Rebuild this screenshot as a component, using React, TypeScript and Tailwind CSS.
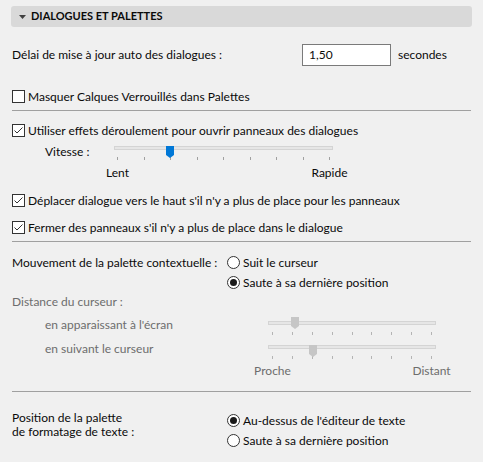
import React from "react";

function Checkbox({ checked }: { checked?: boolean }) {
  return (
    <span className="w-[13px] h-[13px] shrink-0 border border-[#333333] bg-white flex items-center justify-center">
      {checked && (
        <svg width="11" height="11" viewBox="0 0 11 11">
          <path d="M1.5 5.5 L4 8 L9.5 2.5" fill="none" stroke="#333333" strokeWidth="1" />
        </svg>
      )}
    </span>
  );
}

function Radio({ checked }: { checked?: boolean }) {
  return (
    <span className="w-[13px] h-[13px] shrink-0 rounded-full border border-[#333333] bg-white flex items-center justify-center">
      {checked && <span className="w-[7px] h-[7px] rounded-full bg-[#1a1a1a]" />}
    </span>
  );
}

function Thumb({ color }: { color: string }) {
  return (
    <svg width="8" height="12" viewBox="0 0 8 12">
      <path d="M0 0 H8 V9 L4 12 L0 9 Z" fill={color} />
    </svg>
  );
}

function Slider({
  width,
  thumbAt,
  thumbColor,
  tickColor,
  ticks = 9,
  inset,
}: {
  width: number;
  thumbAt: number;
  thumbColor: string;
  tickColor: string;
  ticks?: number;
  inset: string;
}) {
  return (
    <div className="relative" style={{ width }}>
      <div className="mt-[4px] h-[4px] border border-[#d4d4d4] bg-[#e6e6e6]" />
      <div className="absolute top-0" style={{ left: thumbAt - 4 }}>
        <Thumb color={thumbColor} />
      </div>
      <div className={`mt-[7px] flex justify-between ${inset}`}>
        {Array.from({ length: ticks }).map((_, i) => (
          <span key={i} className="w-px h-[3px]" style={{ background: tickColor }} />
        ))}
      </div>
    </div>
  );
}

function CheckRow({ checked, label, className }: { checked?: boolean; label: string; className: string }) {
  return (
    <div className={`flex items-center h-[13px] pl-[1px] gap-[3px] ${className}`}>
      <Checkbox checked={checked} />
      <span className="leading-[16px] whitespace-nowrap">{label}</span>
    </div>
  );
}

function RadioRow({ checked, label }: { checked?: boolean; label: string }) {
  return (
    <div className="flex items-center h-[13px] gap-[3px]">
      <Radio checked={checked} />
      <span className="leading-[16px] whitespace-nowrap">{label}</span>
    </div>
  );
}

export default function App() {
  return (
    <div className="w-[483px] h-[462px] bg-[#f0f0f0] pt-[6px] px-[11px] text-[12px] text-[#0a0a0a] font-['Lato',sans-serif] overflow-hidden">
      {/* Section header */}
      <div className="h-[21px] rounded-[3px] bg-[#d9d9d9] flex items-center pl-[8px] gap-[5px]">
        <svg width="7" height="4" viewBox="0 0 7 4">
          <path d="M0 0 H7 L3.5 4 Z" fill="#404040" />
        </svg>
        <span className="font-bold text-[11px]">DIALOGUES ET PALETTES</span>
      </div>

      <div className="mt-[17px] h-[22px] flex items-center">
        <span className="w-[291px] pl-[1px] whitespace-nowrap">Délai de mise à jour auto des dialogues :</span>
        <div className="w-[89px] h-[22px] border border-[#7a7a7a] bg-white pl-[6px] flex items-center">1,50</div>
        <span className="ml-[7px]">secondes</span>
      </div>

      <CheckRow className="mt-[24px]" label="Masquer Calques Verrouillés dans Palettes" />

      <div className="mt-[7px] mx-[1px] h-px bg-[#a0a0a0]" />

      <CheckRow className="mt-[13px]" checked label="Utiliser effets déroulement pour ouvrir panneaux des dialogues" />

      {/* Speed slider */}
      <div className="mt-[5px] flex items-start">
        <span className="w-[103px] pl-[34px] pt-[2px] leading-[16px]">Vitesse :</span>
        <div>
          <Slider width={219} thumbAt={56} thumbColor="#0078d7" tickColor="#a0a0a0" inset="px-[3px]" />
          <div className="mt-[5px] flex justify-between px-[3px] leading-[16px]">
            <span className="w-px flex justify-center whitespace-nowrap">Lent</span>
            <span className="w-px flex justify-center whitespace-nowrap">Rapide</span>
          </div>
        </div>
      </div>

      <CheckRow className="mt-[13px]" checked label="Déplacer dialogue vers le haut s'il n'y a plus de place pour les panneaux" />
      <CheckRow className="mt-[14px]" checked label="Fermer des panneaux s'il n'y a plus de place dans le dialogue" />

      <div className="mt-[7px] mx-[1px] h-px bg-[#a0a0a0]" />

      <div className="mt-[14px] flex items-start">
        <span className="w-[216px] pl-[1px] leading-[13px] whitespace-nowrap">Mouvement de la palette contextuelle :</span>
        <div className="flex flex-col gap-[7px]">
          <RadioRow label="Suit le curseur" />
          <RadioRow checked label="Saute à sa dernière position" />
        </div>
      </div>

      <div className="mt-[5px] pl-[1px] leading-[16px] text-[#6d6d6d]">Distance du curseur :</div>

      <div className="mt-[7px] flex items-start text-[#6d6d6d]">
        <span className="w-[257px] pl-[34px] leading-[16px]">en apparaissant à l'écran</span>
        <Slider width={168} thumbAt={27} thumbColor="#c6c6c6" tickColor="#b4b4b4" inset="px-[4px]" />
      </div>

      <div className="mt-[6px] flex items-start text-[#6d6d6d]">
        <span className="w-[257px] pl-[34px] leading-[16px]">en suivant le curseur</span>
        <div>
          <Slider width={168} thumbAt={45} thumbColor="#c6c6c6" tickColor="#b4b4b4" inset="px-[4px]" />
          <div className="mt-[4px] flex justify-between px-[4px] leading-[16px]">
            <span className="w-px flex justify-center whitespace-nowrap">Proche</span>
            <span className="w-px flex justify-center whitespace-nowrap">Distant</span>
          </div>
        </div>
      </div>

      <div className="mt-[12px] mx-[1px] h-px bg-[#a0a0a0]" />

      <div className="mt-[19px] flex items-start">
        <span className="w-[216px] pl-[1px] leading-[14px]">
          Position de la palette
          <br />
          de formatage de texte :
        </span>
        <div className="pt-[3px] flex flex-col gap-[7px]">
          <RadioRow checked label="Au-dessus de l'éditeur de texte" />
          <RadioRow label="Saute à sa dernière position" />
        </div>
      </div>
    </div>
  );
}
